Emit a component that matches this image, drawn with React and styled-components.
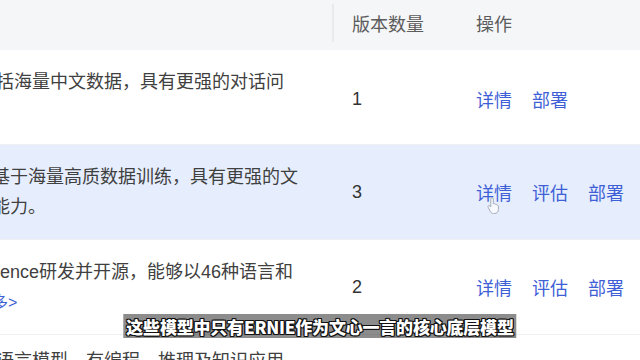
import React from "react";
import styled, { createGlobalStyle } from "styled-components";

const Global = createGlobalStyle`
  html, body { margin: 0; padding: 0; background: #ffffff; }
  body { font-family: "Liberation Sans", "Noto Sans CJK SC", sans-serif; }
`;

const Page = styled.div`
  position: relative;
  width: 640px;
  height: 360px;
  overflow: hidden;
  background: #ffffff;
  font-family: "Liberation Sans", "Noto Sans CJK SC", sans-serif;
`;

const Table = styled.div`
  margin-left: -8px;
  width: 680px;
  display: flex;
  flex-direction: column;
`;

const cols = "340px 124px 1fr";

const HeaderRow = styled.div`
  display: grid;
  grid-template-columns: ${cols};
  height: 50px;
  background: #f5f6f8;
`;

const HeaderCell = styled.div`
  display: flex;
  align-items: center;
  padding-left: ${(p) => (p.$divider ? "18px" : "20px")};
  margin: 4px 0 8px;
  font-size: 18px;
  color: #5c5c5c;
  border-left: ${(p) => (p.$divider ? "2px solid #e9eaed" : "none")};
`;

const Row = styled.div`
  display: grid;
  grid-template-columns: ${cols};
  align-items: center;
  min-height: 95px;
  padding: 11px 0;
  box-sizing: border-box;
  background: ${(p) => (p.$active ? "#e6eefd" : "#ffffff")};
  border-bottom: 1px solid #eef0f3;
`;

const Desc = styled.div`
  font-size: 18px;
  line-height: 30px;
  color: #404040;
  white-space: nowrap;
  overflow: hidden;
  padding-right: 16px;
`;

const Line = styled.div`
  padding-left: ${(p) => p.$indent || 0}px;
`;

const More = styled.span`
  color: #3f5fd6;
  font-size: 16px;
`;

const Count = styled.div`
  padding-left: 20px;
  font-size: 18px;
  color: #333333;
  padding-top: ${(p) => (p.$nudge ? "4px" : "0")};
`;

const Actions = styled.div`
  display: flex;
  gap: 20px;
  padding-left: 20px;
  padding-top: ${(p) => (p.$nudge ? "4px" : "0")};
`;

const Action = styled.a`
  font-size: 18px;
  color: #3f5fd6;
  text-decoration: none;
  font-family: "Noto Sans CJK SC", sans-serif;
`;

const Cursor = styled.svg`
  position: absolute;
  left: 487px;
  top: 196px;
  width: 14px;
  height: 18px;
  opacity: 0.7;
`;

const Subtitle = styled.div`
  position: absolute;
  left: 50%;
  bottom: 22px;
  transform: translateX(-50%);
  height: 24px;
  padding: 0 3px;
  display: flex;
  align-items: center;
  background: rgba(0, 0, 0, 0.45);
  color: #ffffff;
  font-family: "Noto Sans CJK SC", sans-serif;
  font-weight: 900;
  font-size: 17px;
  letter-spacing: -0.2px;
  white-space: nowrap;
  text-shadow: 1px 0 0 #111, -1px 0 0 #111, 0 1px 0 #111, 0 -1px 0 #111,
    1px 1px 0 #111, -1px -1px 0 #111, 1px -1px 0 #111, -1px 1px 0 #111;
`;

const rows = [
  {
    lines: [{ t: "括海量中文数据，具有更强的对话问", indent: 4 }, { t: "\u00a0" }],
    count: 1,
    actions: ["详情", "部署"],
    nudge: true,
  },
  {
    lines: [{ t: "基于海量高质数据训练，具有更强的文" }, { t: "能力。" }],
    count: 3,
    actions: ["详情", "评估", "部署"],
    active: true,
  },
  {
    lines: [{ t: "ence研发并开源，能够以46种语言和", indent: 8 }, { more: true }],
    count: 2,
    actions: ["详情", "评估", "部署"],
  },
  {
    lines: [
      { t: "语言模型，有编程、推理及知识应用", indent: 4 },
      { t: "能力，支持多语言对话与文本创作", indent: 4 },
      { t: "任务。", indent: 4 },
    ],
    count: 1,
    actions: ["详情", "部署"],
  },
];

export default function App() {
  return (
    <Page>
      <Global />
      <Table>
        <HeaderRow>
          <HeaderCell />
          <HeaderCell $divider>版本数量</HeaderCell>
          <HeaderCell>操作</HeaderCell>
        </HeaderRow>
        {rows.map((r, i) => (
          <Row key={i} $active={r.active}>
            <Desc>
              {r.lines.map((l, j) => (
                <Line key={j} $indent={l.indent}>
                  {l.more ? <More>多&gt;</More> : l.t}
                </Line>
              ))}
            </Desc>
            <Count $nudge={r.nudge}>{r.count}</Count>
            <Actions $nudge={r.nudge}>
              {r.actions.map((a) => (
                <Action key={a}>{a}</Action>
              ))}
            </Actions>
          </Row>
        ))}
      </Table>
      <Cursor viewBox="0 0 14 18">
        <path
          d="M5 1.5c.8 0 1.3.6 1.3 1.3v5l.4-.1c.7-.3 1.4.1 1.6.7.6-.3 1.4 0 1.6.7.7-.2 1.4.3 1.5 1v3.4c0 2.4-1.6 4-3.8 4H6.4c-1.3 0-2.2-.7-2.9-1.7L1.2 11.3c-.4-.6-.2-1.3.3-1.6.5-.3 1.1-.2 1.5.3l.8 1V2.8c0-.7.5-1.3 1.2-1.3z"
          fill="#ffffff"
          stroke="#8a8f99"
          strokeWidth="1"
        />
      </Cursor>
      <Subtitle>这些模型中只有ERNIE作为文心一言的核心底层模型</Subtitle>
    </Page>
  );
}
